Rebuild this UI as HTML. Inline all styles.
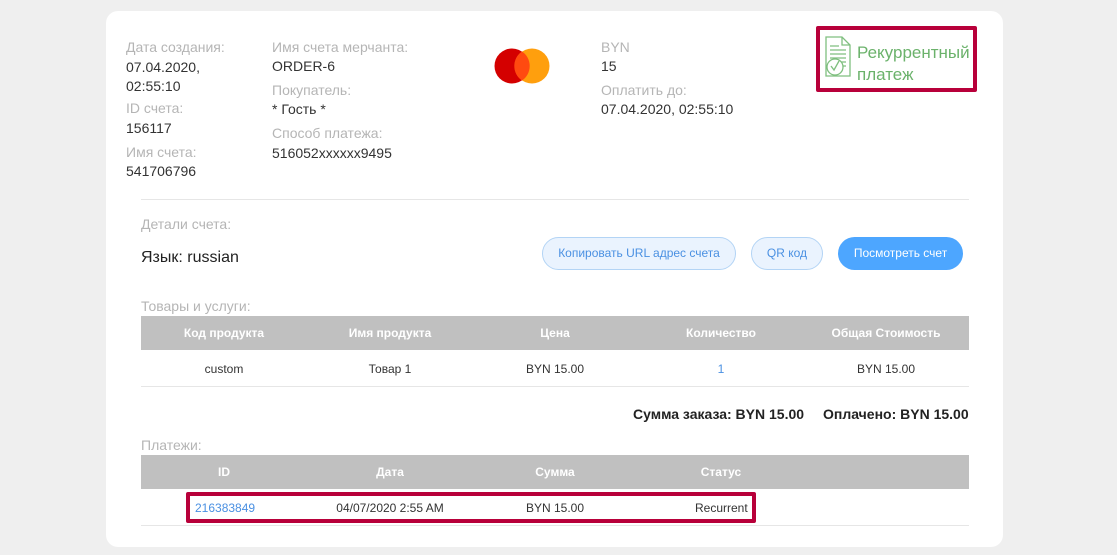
<!DOCTYPE html>
<html><head><meta charset="utf-8"><style>
*{margin:0;padding:0;box-sizing:border-box}
body{width:1117px;height:555px;background:#efefef;font-family:"Liberation Sans",Arial,sans-serif;position:relative;overflow:hidden}
.card{position:absolute;left:106px;top:11px;width:897px;height:536px;background:#fff;border-radius:12px}
.a{position:absolute;white-space:nowrap}
.l{color:#b5b5b5;font-size:14px}
.v{color:#333;font-size:14px}
.th{position:absolute;background:#c0c0c0;height:34px;left:141px;width:828px}
.th span,.tr span{position:absolute;width:166px;text-align:center;top:0;line-height:34px;font-size:12px}
.th span{color:#fff;font-weight:bold}
.tr{position:absolute;left:141px;width:828px;height:37px;border-bottom:1px solid #e6e6e6}
.tr span{line-height:38px;color:#333}
.btn{position:absolute;top:237px;height:33px;border-radius:17px;font-size:12px;line-height:31px;text-align:center}
.b1{background:#eaf3fe;border:1px solid #b3d4f5;color:#4a90e2}
</style></head><body>
<div class="card"></div>
<div class="a l" style="left:126px;top:39px">Дата создания:</div>
<div class="a v" style="left:126px;top:58px;line-height:19px">07.04.2020,<br>02:55:10</div>
<div class="a l" style="left:126px;top:100px">ID счета:</div>
<div class="a v" style="left:126px;top:120px">156117</div>
<div class="a l" style="left:126px;top:144px">Имя счета:</div>
<div class="a v" style="left:126px;top:163px">541706796</div>
<div class="a l" style="left:272px;top:39px">Имя счета мерчанта:</div>
<div class="a v" style="left:272px;top:58px">ORDER-6</div>
<div class="a l" style="left:272px;top:82px">Покупатель:</div>
<div class="a v" style="left:272px;top:101px">* Гость *</div>
<div class="a l" style="left:272px;top:125px">Способ платежа:</div>
<div class="a v" style="left:272px;top:145px">516052xxxxxx9495</div>
<svg class="a" style="left:494px;top:48px" width="56" height="36"><circle cx="18" cy="18" r="17.5" fill="#d40000"/><circle cx="38" cy="18" r="17.5" fill="#ff9a00" fill-opacity=".95"/><path d="M28 3.5a17.5 17.5 0 0 1 0 29a17.5 17.5 0 0 1 0-29z" fill="#ff4a10"/></svg>
<div class="a l" style="left:601px;top:39px">BYN</div>
<div class="a v" style="left:601px;top:58px">15</div>
<div class="a l" style="left:601px;top:82px">Оплатить до:</div>
<div class="a v" style="left:601px;top:101px">07.04.2020, 02:55:10</div>
<div class="a" style="left:816px;top:26px;width:161px;height:66px;border:4px solid #b8003a;border-radius:2px"></div>
<svg class="a" style="left:824px;top:36px" width="30" height="42" fill="none" stroke="#7fbf7f" stroke-width="1.3"><path d="M2 1h16l8 8v31H2z"/><path d="M18 1v8h8"/><path d="M6 10h9M6 14h16M6 18h16M6 22h16M6 26h16M6 30h16"/><circle cx="11" cy="31" r="8" fill="#fff"/><path d="M7 30l3 4 5-9"/></svg>
<div class="a" style="left:857px;top:42px;color:#6bb26b;font-size:17px;line-height:22px">Рекуррентный<br>платеж</div>
<div class="a" style="left:141px;top:199px;width:828px;border-top:1px solid #e6e6e6"></div>
<div class="a l" style="left:141px;top:216px">Детали счета:</div>
<div class="a" style="left:141px;top:249px;font-size:16px;color:#222">Язык: russian</div>
<div class="btn b1" style="left:542px;width:194px">Копировать URL адрес счета</div>
<div class="btn b1" style="left:751px;width:72px">QR код</div>
<div class="btn" style="left:838px;width:125px;background:#4da6ff;color:#fff;line-height:33px">Посмотреть счет</div>
<div class="a l" style="left:141px;top:298px">Товары и услуги:</div>
<div class="th" style="top:316px"><span style="left:0">Код продукта</span><span style="left:166px">Имя продукта</span><span style="left:331px">Цена</span><span style="left:497px">Количество</span><span style="left:662px">Общая Стоимость</span></div>
<div class="tr" style="top:350px"><span style="left:0">custom</span><span style="left:166px">Товар 1</span><span style="left:331px">BYN 15.00</span><span style="left:497px;color:#4a90e2">1</span><span style="left:662px">BYN 15.00</span></div>
<div class="a" style="left:633px;top:406px;font-size:14px;font-weight:bold;color:#222">Сумма заказа: BYN 15.00</div>
<div class="a" style="left:823px;top:406px;font-size:14px;font-weight:bold;color:#222">Оплачено: BYN 15.00</div>
<div class="a l" style="left:141px;top:437px">Платежи:</div>
<div class="th" style="top:455px"><span style="left:0">ID</span><span style="left:166px">Дата</span><span style="left:331px">Сумма</span><span style="left:497px">Статус</span></div>
<div class="tr" style="top:489px"><span style="left:54px;width:auto;color:#4a90e2">216383849</span><span style="left:166px">04/07/2020 2:55 AM</span><span style="left:331px">BYN 15.00</span><span style="left:554px;width:auto">Recurrent</span></div>
<div class="a" style="left:186px;top:492px;width:570px;height:31px;border:4px solid #b8003a;border-radius:2px"></div>
</body></html>
